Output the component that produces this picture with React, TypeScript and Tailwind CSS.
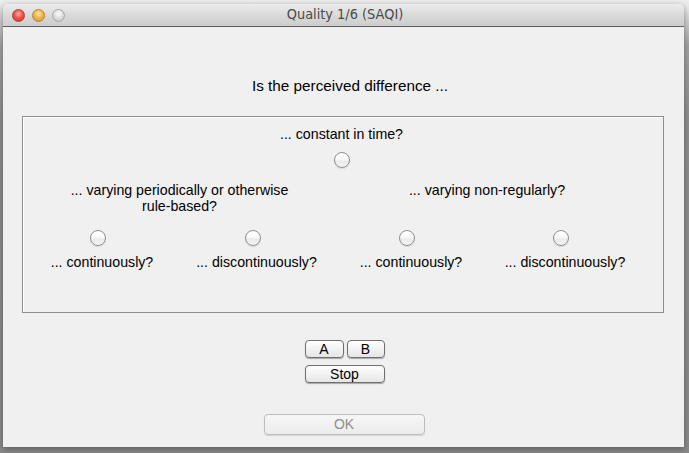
import React from "react";

const font = { fontFamily: '"Liberation Sans", Arial, sans-serif' };

function Radio() {
  return (
    <div className="w-[16px] h-[16px] rounded-full border border-[#8f8f8f] bg-[linear-gradient(to_bottom,#ffffff_0%,#fbfbfb_40%,#ebebeb_60%,#f4f4f4_100%)] shadow-[0_1px_1px_rgba(0,0,0,0.1)]" />
  );
}

function Btn({ label, w, disabled }: { label: string; w: string; disabled?: boolean }) {
  return (
    <div
      className={
        disabled
          ? `${w} h-[21px] rounded-[4px] border border-[#bdbdbd] bg-[linear-gradient(to_bottom,#f6f6f6,#ececec)] shadow-[0_1px_1px_rgba(0,0,0,0.12)] flex items-center justify-center text-[14px] text-[#8e8e8e]`
          : `${w} h-[18px] rounded-[4px] border border-[#6f6f6f] bg-[linear-gradient(to_bottom,#ffffff,#f2f2f2_50%,#e6e6e6)] shadow-[0_1px_1px_rgba(0,0,0,0.3)] flex items-center justify-center text-[14px] text-black`
      }
    >
      {label}
    </div>
  );
}

function Light({ cls }: { cls: string }) {
  return <div className={`w-[13px] h-[13px] rounded-full ${cls}`} />;
}

export default function App() {
  return (
    <div
      className="w-[689px] h-[453px] overflow-hidden bg-[linear-gradient(to_bottom,#eeeeee_0px,#e4e4e4_10px,#a2a2a2_45px,#8e8e8e_120px,#8a8a8a_100%)] pt-[4px] pl-[3px]"
      style={font}
    >
      <div className="w-[681px] h-[443px] rounded-t-[5px] bg-[#f0f0f0] flex flex-col shadow-[0_2px_6px_rgba(0,0,0,0.35)]">
        {/* Title bar */}
        <div className="relative h-[23px] rounded-t-[5px] border-b border-[#5e5e5e] bg-[linear-gradient(to_bottom,#ececec,#dadada_50%,#cdcdcd)] flex items-center">
          <div className="flex items-center gap-[7px] pl-[9px]">
            <Light cls="border border-[#b23d38] bg-[radial-gradient(circle_at_50%_35%,#ffb3ad_0%,#f0534c_45%,#c6302a_100%)]" />
            <Light cls="border border-[#b98031] bg-[radial-gradient(circle_at_50%_35%,#ffe6a8_0%,#f1b84a_45%,#d08f25_100%)]" />
            <Light cls="border border-[#a8a8a8] bg-[radial-gradient(circle_at_50%_35%,#ffffff_0%,#dcdcdc_50%,#bdbdbd_100%)]" />
          </div>
          <div
            className="absolute inset-0 flex items-center justify-center pl-[3px] text-[14.4px] text-[#4a4a4a]"
            style={{ fontFamily: '"DejaVu Sans Condensed", "Liberation Sans", sans-serif' }}
          >
            Quality 1/6 (SAQI)
          </div>
        </div>

        {/* Content */}
        <div className="flex flex-col">
          <div className="mt-[51px] h-[16px] leading-[16px] text-[15.3px] text-black text-center pl-[13px]">
            Is the perceived difference ...
          </div>

          <div className="mt-[22px] ml-[19px] w-[642px] h-[197px] border border-[#8e8e8e]">
            <div className="h-full border-t border-l border-white flex flex-col items-center text-[14.2px] text-black">
              <div className="flex flex-col items-center pr-[4px]">
                <div className="mt-[8px] h-[16px] leading-[16px]">... constant in time?</div>
                <div className="mt-[10px]">
                  <Radio />
                </div>
              </div>
              <div className="self-start ml-[-3px] mt-[14px] grid grid-cols-[154px_155px_154px_154px]">
                <div className="col-span-2 h-[32px] leading-[16px] text-center pl-[8px]">
                  ... varying periodically or otherwise
                  <br />
                  rule-based?
                </div>
                <div className="col-span-2 h-[32px] leading-[16px] text-center pl-[6px]">
                  ... varying non-regularly?
                </div>
                {[0, 1, 2, 3].map((i) => (
                  <div key={"r" + i} className="mt-[16px] flex justify-center">
                    <Radio />
                  </div>
                ))}
                {["... continuously?", "... discontinuously?", "... continuously?", "... discontinuously?"].map((t, i) => (
                  <div key={"l" + i} className="mt-[8px] h-[16px] leading-[16px] text-center pl-[8px] whitespace-nowrap">
                    {t}
                  </div>
                ))}
              </div>
            </div>
          </div>

          <div className="mt-[27px] flex flex-col items-center pl-[2px]">
            <div className="flex gap-[3px]">
              <Btn label="A" w="w-[39px]" />
              <Btn label="B" w="w-[38px]" />
            </div>
            <div className="mt-[7px]">
              <Btn label="Stop" w="w-[80px]" />
            </div>
            <div className="mt-[31px] pr-[1px]">
              <Btn label="OK" w="w-[161px]" disabled />
            </div>
          </div>
        </div>
      </div>
    </div>
  );
}
